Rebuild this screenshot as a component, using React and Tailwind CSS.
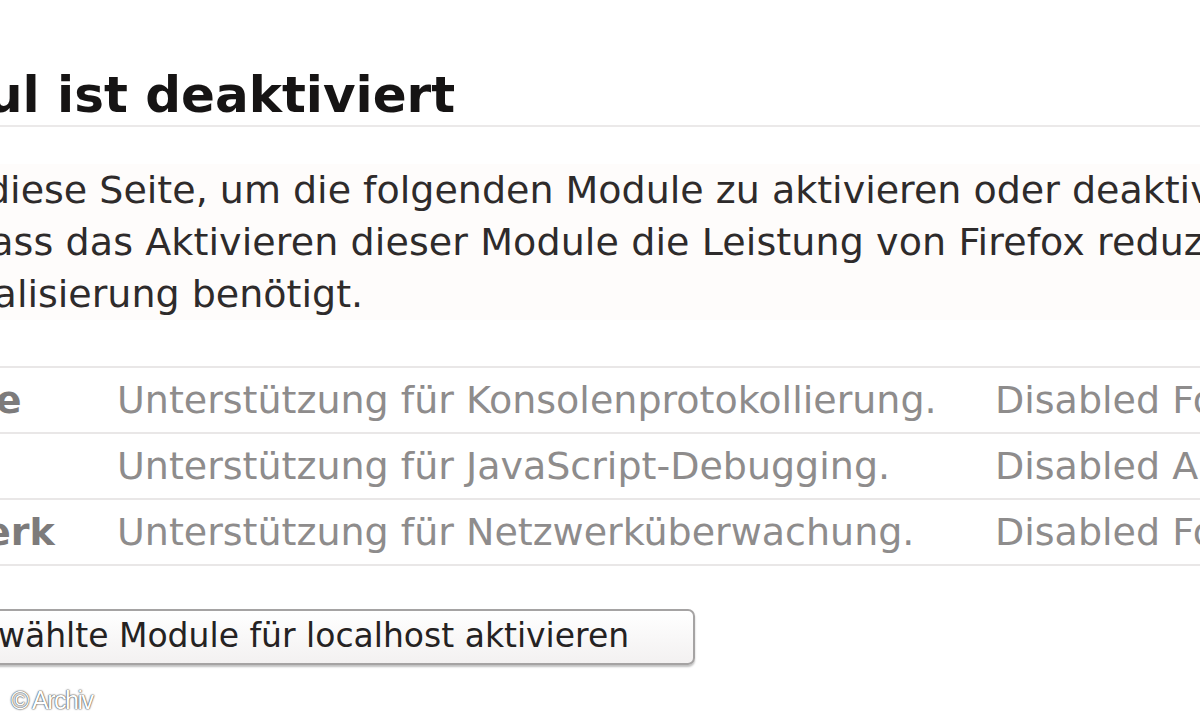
import React from 'react';

const modules = [
  { name: 'Konsole', desc: 'Unterstützung für Konsolenprotokollierung.', state: 'Disabled For All Sites' },
  { name: 'Skript', desc: 'Unterstützung für JavaScript-Debugging.', state: 'Disabled Always' },
  { name: 'Netzwerk', desc: 'Unterstützung für Netzwerküberwachung.', state: 'Disabled For All Sites' },
];

export default function App() {
  return (
    <div className="relative w-[1200px] h-[720px] overflow-hidden bg-white font-['DejaVu_Sans','Bitstream_Vera_Sans',sans-serif]">
      {/* Heading */}
      <div className="pt-[65px] border-b-2 border-[#ebe9e9]">
        <h1 className="-ml-[133px] whitespace-nowrap text-[50px] leading-[60px] font-bold text-[#161414]">
          Modul ist deaktiviert
        </h1>
      </div>

      {/* Intro text */}
      <div className="mt-[37px] bg-[#fefcfb] text-[38px] leading-[52px] text-[#2e2b2b] whitespace-nowrap">
        <div className="-ml-[14px]">diese Seite, um die folgenden Module zu aktivieren oder deaktivieren.</div>
        <div className="-ml-[34px] tracking-[0.1px]">dass das Aktivieren dieser Module die Leistung von Firefox reduziert.</div>
        <div className="-ml-[86px]">Visualisierung benötigt.</div>
      </div>

      {/* Module table */}
      <div className="mt-[46px] -ml-[135px] border-b-2 border-[#e9e7e7] text-[38px] text-[#8e8c8c] whitespace-nowrap">
        {modules.map((m) => (
          <div key={m.name} className="flex h-[66px] items-center border-t-2 border-[#e9e7e7]">
            <div className="w-[252px] shrink-0 overflow-hidden">
              <div className="-ml-[13px] font-bold text-[#7d7b7b]">{m.name}</div>
            </div>
            <div className="w-[878px] shrink-0">{m.desc}</div>
            <div className="shrink-0">{m.state}</div>
          </div>
        ))}
      </div>

      {/* Button */}
      <div className="mt-[43px] -ml-[120px]">
        <button className="h-[56px] w-[815px] pl-[14px] pb-[4px] text-left rounded-[7px] border-2 border-[#a5a3a3] bg-gradient-to-b from-white to-[#f3f1f1] shadow-[0_2px_2px_rgba(0,0,0,0.25)] text-[33px] text-[#252222] whitespace-nowrap">
          Ausgewählte Module für localhost aktivieren
        </button>
      </div>

      {/* Watermark */}
      <div className="absolute left-[11px] top-[682px] font-['Liberation_Sans',Arial,sans-serif] text-[25px] tracking-[-1.5px] text-white [text-shadow:0_0_2px_#444,0_0_1px_#222]">
        © Archiv
      </div>
    </div>
  );
}
